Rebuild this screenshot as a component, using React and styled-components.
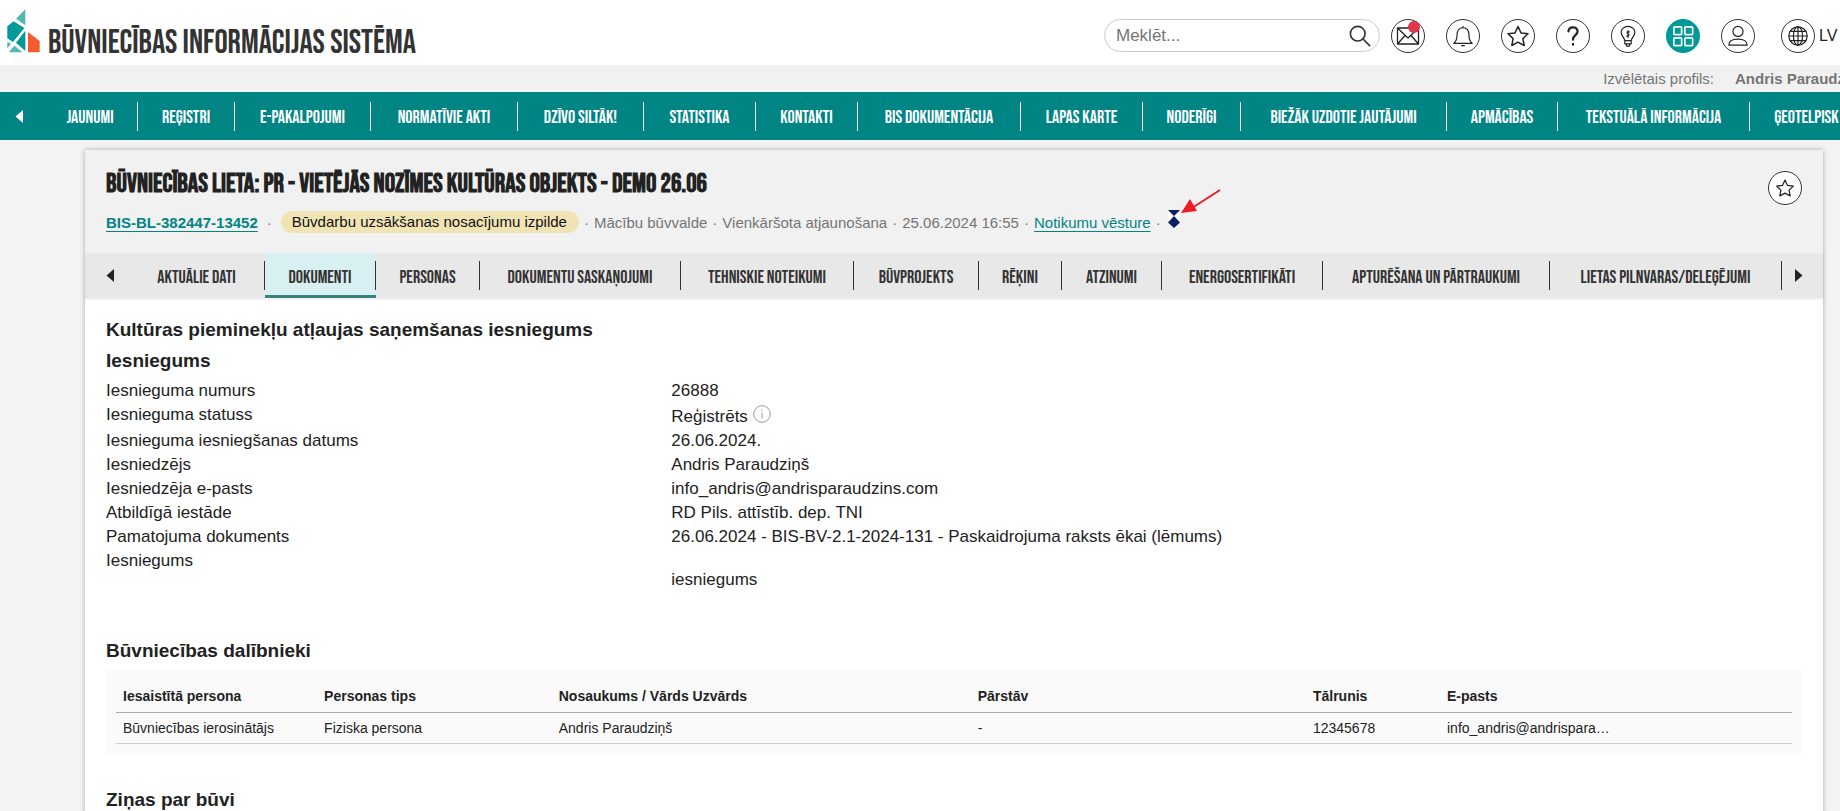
import React from 'react';
import styled, { createGlobalStyle } from 'styled-components';

const sans = "'Liberation Sans', Arial, sans-serif";
const narrow = "'Bebas Neue', 'Liberation Sans', sans-serif";

const GlobalStyle = createGlobalStyle`
  * { box-sizing: border-box; }
  body {
    margin: 0;
    background: #f3f3f3;
    color: #222;
    font-family: ${sans};
    font-size: 17px;
    overflow: hidden;
  }
`

const Page = styled.div`
  height: 100vh;
  overflow: hidden;
`

const Header = styled.header`
  display: flex;
  align-items: center;
  justify-content: space-between;
  height: 65px;
  padding-left: 7px;
  background: #fff;
`

const Brand = styled.a`
  display: flex;
  align-items: flex-end;
  gap: 8px;
  padding-bottom: 4px;
  color: #333;
  text-decoration: none;
  white-space: nowrap;
`

const BrandName = styled.span`
  font-family: ${narrow};
  font-size: 33px;
  line-height: 20px;
`

const Tools = styled.div`
  display: flex;
  align-items: center;
  gap: 21px;
  padding-bottom: 4px;
  margin-top: 10px;
`

const Search = styled.form`
  display: flex;
  align-items: center;
  width: 276px;
  height: 33px;
  padding: 0 8px 0 11px;
  margin-right: -10px;
  border: 1px solid #ccc;
  border-radius: 17px;
`

const SearchInput = styled.input`
  flex: 1;
  min-width: 0;
  border: 0;
  padding: 0;
  background: transparent;
  font-family: ${sans};
  font-size: 17px;
  outline: none;
  &::placeholder { color: #757575; opacity: 1; }
`

const SearchButton = styled.button`
  border: 0;
  padding: 0;
  height: 22px;
  background: transparent;
  color: #333;
`

const RoundButton = styled.button`
  position: relative;
  display: flex;
  align-items: center;
  justify-content: center;
  flex: none;
  width: 34px;
  height: 34px;
  padding: 0;
  border: 1px solid ${props => props.$filled ? '#009999' : '#333'};
  border-radius: 50%;
  background: ${props => props.$filled ? '#009999' : '#fff'};
  color: ${props => props.$filled ? '#fff' : '#222'};
`

const Badge = styled.span`
  position: absolute;
  top: 1px;
  right: 4px;
  width: 12px;
  height: 12px;
  border-radius: 50%;
  background: #e0364c;
`

const Language = styled.div`
  display: flex;
  align-items: center;
  gap: 4px;
  width: 59px;
  margin-left: 5px;
  color: #222;
  font-size: 16px;
`

const ProfileBar = styled.div`
  display: flex;
  justify-content: flex-end;
  gap: 21px;
  height: 27px;
  line-height: 27px;
  background: #f1f1f1;
  color: #757575;
  font-size: 15px;
`

const ProfileName = styled.strong`
  width: 105px;
  overflow: hidden;
  white-space: nowrap;
`

const MainNav = styled.nav`
  display: flex;
  align-items: center;
  height: 48px;
  overflow: hidden;
  background: #008484;
  color: #fff;
`

const ScrollButton = styled.button`
  display: flex;
  align-items: center;
  flex: none;
  width: ${props => props.$width}px;
  padding: 0 0 0 ${props => props.$inset}px;
  border: 0;
  background: transparent;
  color: inherit;
`

const MainLink = styled.a`
  flex: none;
  width: ${props => props.$width}px;
  padding-top: 2px;
  line-height: 27px;
  border-right: 1px solid #fff;
  color: #fff;
  font-family: ${narrow};
  font-size: 18px;
  text-align: center;
  text-decoration: none;
  white-space: nowrap;
  &:last-child { border-right: 0; }
`

const Card = styled.main`
  margin: 10px 17px 0 85px;
  min-height: 661px;
  background: #fff;
  box-shadow: 0 0 5px rgba(0, 0, 0, 0.3);
`

const CaseHeader = styled.div`
  display: flex;
  justify-content: space-between;
  align-items: flex-start;
  height: 103px;
  padding: 21px 21px 0;
  background: #f1f1f1;
`

const CaseTitle = styled.h1`
  margin: 0;
  font-family: ${narrow};
  font-size: 26px;
  line-height: 28px;
  font-weight: 700;
`

const Meta = styled.div`
  display: flex;
  align-items: center;
  gap: 5px;
  height: 22px;
  margin-top: 12px;
  color: #757575;
  font-size: 15px;
  white-space: nowrap;
`

const CaseLink = styled.a`
  color: #008484;
  font-weight: ${props => props.$strong ? 700 : 400};
  text-underline-offset: 3px;
`

const Dot = styled.span`
  margin: 0 ${props => props.$wide ? 4 : 0}px;
`

const Pill = styled.span`
  padding: 0 12px 0 11px;
  line-height: 22px;
  border-radius: 11px;
  background: #f0e4b4;
  color: #111;
`

const MarkerIcon = styled.span`
  position: relative;
  height: 18px;
  margin-left: 2px;
  margin-top: -6px;
`

const Arrow = styled.svg`
  position: absolute;
  left: 13px;
  top: -21px;
`

const Tabs = styled.nav`
  display: flex;
  align-items: center;
  height: 45px;
  background: #e8e8e8;
  color: #222;
  box-shadow: 0 1px 2px rgba(0, 0, 0, 0.1);
`

const TabList = styled.div`
  display: flex;
  flex: 1;
  min-width: 0;
  overflow: hidden;
`

const Tab = styled.a`
  flex: none;
  display: flex;
  align-items: center;
  height: 45px;
  width: ${props => props.$width}px;
  padding-top: ${props => props.$active ? 3 : 0}px;
  border-bottom: ${props => props.$active ? '3px solid #388280' : '0'};
  background: ${props => props.$active ? '#d8f0f1' : 'transparent'};
  color: #333;
  text-decoration: none;
`

const TabLabel = styled.span`
  flex: 1;
  padding-top: 4px;
  line-height: 25px;
  border-right: 1px solid #333;
  font-family: ${narrow};
  font-size: 18px;
  text-align: center;
  white-space: nowrap;
`

const Content = styled.section`
  padding: 16px 21px 0;
`

const Heading = styled.h2`
  margin: 0;
  font-size: 19px;
  line-height: 31px;
`

const Details = styled.dl`
  display: grid;
  grid-template-columns: 1fr 2fr;
  grid-auto-rows: minmax(24px, auto);
  line-height: 24px;
  margin: 3px 0 43px;
`

const Term = styled.dt`
  margin: 0;
`

const Value = styled.dd`
  margin: 0;
  padding-top: ${props => props.$drop || 0}px;
`

const InfoIcon = styled.svg`
  vertical-align: -1px;
`

const TableBox = styled.div`
  margin: 4px 0 29px;
  padding: 10px 10px 11px;
  background: #fafafa;
`

const Table = styled.table`
  width: 100%;
  table-layout: fixed;
  border-collapse: collapse;
  font-size: 14px;
  line-height: 16px;
  text-align: left;
`

const HeadCell = styled.th`
  width: ${props => props.$width};
  padding: 8px 7px;
  border-bottom: 1px solid #aaa;
`

const Cell = styled.td`
  padding: 7px;
  border-bottom: 1px solid #ccc;
`

const mainItems = [
    ['JAUNUMI', 95],
    ['REĢISTRI', 97],
    ['E-PAKALPOJUMI', 136],
    ['NORMATĪVIE AKTI', 147],
    ['DZĪVO SILTĀK!', 126],
    ['STATISTIKA', 112],
    ['KONTAKTI', 102],
    ['BIS DOKUMENTĀCIJA', 163],
    ['LAPAS KARTE', 122],
    ['NODERĪGI', 98],
    ['BIEŽĀK UZDOTIE JAUTĀJUMI', 206],
    ['APMĀCĪBAS', 111],
    ['TEKSTUĀLĀ INFORMĀCIJA', 192],
    ['ĢEOTELPISK', 113],
]

const tabItems = [
    ['AKTUĀLIE DATI', 136],
    ['DOKUMENTI', 111],
    ['PERSONAS', 104],
    ['DOKUMENTU SASKAŅOJUMI', 201],
    ['TEHNISKIE NOTEIKUMI', 173],
    ['BŪVPROJEKTS', 125],
    ['RĒĶINI', 83],
    ['ATZINUMI', 100],
    ['ENERGOSERTIFIKĀTI', 161],
    ['APTURĒŠANA UN PĀRTRAUKUMI', 227],
    ['LIETAS PILNVARAS/DELEĢĒJUMI', 232],
]

const columns = [
    ['Iesaistītā persona', '12%', 'Būvniecības ierosinātājs'],
    ['Personas tips', '14%', 'Fiziska persona'],
    ['Nosaukums / Vārds Uzvārds', '25%', 'Andris Paraudziņš'],
    ['Pārstāv', '20%', '-'],
    ['Tālrunis', '8%', '12345678'],
    ['E-pasts', '21%', 'info_andris@andrispara…'],
]

const Stroke = ({ size = 22, width = 1.3, children }) => (
    <svg width={size} height={size} viewBox="0 0 24 24" fill="none" stroke="currentColor" strokeWidth={width} strokeLinejoin="round" strokeLinecap="round" aria-hidden="true">
        {children}
    </svg>
)

const StarIcon = ({ size }) => (
    <Stroke size={size} width={1.5}>
        <path d="M12 2.5l3 6.4 7 .9-5.1 4.8 1.3 6.9-6.2-3.4-6.2 3.4 1.3-6.9L2 9.8l7-.9z" />
    </Stroke>
)

const Triangle = ({ right }) => (
    <svg width="8" height="13" viewBox="0 0 8 13" aria-hidden="true">
        <path d={right ? 'M0 0v13l7.5-6.5z' : 'M8 0v13L.5 6.5z'} fill="currentColor" />
    </svg>
)

const Logo = () => (
    <svg width="33" height="44" viewBox="0 0 99 132" aria-hidden="true">
        <path d="M55 1v48L27 29z" fill="#4fb8b6" />
        <path d="M1 52l19-15 32 20-34 42L1 88z" fill="#009999" />
        <path d="M55 65v61L27 101z" fill="#009999" />
        <path d="M1 98l11 6-11 14zM22 110l24 20H5z" fill="#4fb8b6" />
        <path d="M63 69l35 27v34H63z" fill="#f15d2f" />
    </svg>
)

function TopHeader() {
    return (
        <Header>
            <Brand href="#">
                <Logo />
                <BrandName>BŪVNIECĪBAS INFORMĀCIJAS SISTĒMA</BrandName>
            </Brand>
            <Tools>
                <Search>
                    <SearchInput aria-label="Meklēt" placeholder="Meklēt..." />
                    <SearchButton type="button" aria-label="Meklēt">
                        <Stroke width={1.8}><circle cx="9.5" cy="9.5" r="8" /><path d="M15.3 15.3L22.5 22.5" /></Stroke>
                    </SearchButton>
                </Search>
                <RoundButton aria-label="Ziņojumi">
                    <Stroke size={24}><path d="M1.5 4h21v16h-21zM1.5 4L12 14 22.5 4M1.5 20L9 11.5M22.5 20L15 11.5" /></Stroke>
                    <Badge />
                </RoundButton>
                <RoundButton aria-label="Paziņojumi">
                    <Stroke><path d="M12 1.5V3M2 20h20c-2.500-2-3.500-4-3.500-9 0-5-2.500-8-6.500-8s-6.500 3-6.500 8c0 5-1 7-3.500 9zM10.500 22.500h3" /></Stroke>
                </RoundButton>
                <RoundButton aria-label="Izlase"><StarIcon size={24} /></RoundButton>
                <RoundButton aria-label="Palīdzība">
                    <Stroke width={2.4}><path d="M7 7c.3-3 2.300-4.500 5-4.500s5 1.700 5 4.500c0 4-5 4-5 8.500v.5M12 20.500v1" /></Stroke>
                </RoundButton>
                <RoundButton aria-label="Ieteikumi">
                    <Stroke><path d="M8.500 17c0-3-4-4.500-4-9 0-3.500 3.300-6.500 7.500-6.500s7.500 3 7.500 6.500c0 4.500-4 6-4 9zM8.500 17h7v3.500h-7zM10 20.500l.5 2.500h3l.5-2.500M13.500 7.500c-3-.8-3 1.700-1.500 2.200s1.500 3-1.500 2.300M12 6.500v7" /></Stroke>
                </RoundButton>
                <RoundButton $filled aria-label="Izvēlne">
                    <Stroke width={1.8}><rect x="2" y="2" width="8.5" height="8.5" rx="1" /><rect x="14" y="2" width="8.5" height="8.5" rx="1" /><rect x="2" y="14" width="8.5" height="8.5" rx="1" /><rect x="14" y="14" width="8.5" height="8.5" rx="1" /></Stroke>
                </RoundButton>
                <RoundButton aria-label="Lietotājs">
                    <Stroke><circle cx="12" cy="7" r="5.5" /><path d="M2 22c0-4.500 3.500-6.500 10-6.500S22 17.500 22 22z" /></Stroke>
                </RoundButton>
                <Language>
                    <RoundButton aria-label="Valoda">
                        <Stroke><circle cx="12" cy="12" r="10" /><ellipse cx="12" cy="12" rx="5" ry="10" /><path d="M12 2v20M2 12h20M3.500 7h17M3.500 17h17" /></Stroke>
                    </RoundButton>
                    LV
                </Language>
            </Tools>
        </Header>
    )
}

function CaseInfo() {
    return (
        <CaseHeader>
            <div>
                <CaseTitle>BŪVNIECĪBAS LIETA: PR - VIETĒJĀS NOZĪMES KULTŪRAS OBJEKTS - DEMO 26.06</CaseTitle>
                <Meta>
                    <CaseLink href="#" $strong>BIS-BL-382447-13452</CaseLink>
                    <Dot $wide>·</Dot>
                    <Pill>Būvdarbu uzsākšanas nosacījumu izpilde</Pill>
                    <Dot>·</Dot>
                    <span>Mācību būvvalde</span>
                    <Dot>·</Dot>
                    <span>Vienkāršota atjaunošana</span>
                    <Dot>·</Dot>
                    <span>25.06.2024 16:55</span>
                    <Dot>·</Dot>
                    <CaseLink href="#">Notikumu vēsture</CaseLink>
                    <Dot>·</Dot>
                    <MarkerIcon>
                        <svg width="12" height="18" viewBox="0 0 12 18" aria-hidden="true">
                            <path d="M0 0h12v12H0z" fill="#fff" />
                            <path d="M0 0h12L6 6zM6 6l6 6.5L6 18 0 12.500z" fill="#0a1f66" />
                        </svg>
                        <Arrow width="40" height="26" viewBox="0 0 40 26" aria-hidden="true">
                            <path d="M39 1L11 19" stroke="#ed1c24" strokeWidth="2" />
                            <path d="M0 24L9 10l7 12z" fill="#ed1c24" />
                        </Arrow>
                    </MarkerIcon>
                </Meta>
            </div>
            <RoundButton aria-label="Pievienot izlasei"><StarIcon size={20} /></RoundButton>
        </CaseHeader>
    )
}

function Submission() {
    return (
        <Details>
            <Term>Iesnieguma numurs</Term>
            <Value>26888</Value>
            <Term>Iesnieguma statuss</Term>
            <Value $drop={2}>
                Reģistrēts{' '}
                <InfoIcon width="18" height="18" viewBox="0 0 18 18" fill="none" stroke="#999">
                    <circle cx="9" cy="9" r="8.3" /><path d="M9 7.500v6M9 4.500v1.500" />
                </InfoIcon>
            </Value>
            <Term>Iesnieguma iesniegšanas datums</Term>
            <Value>26.06.2024.</Value>
            <Term>Iesniedzējs</Term>
            <Value>Andris Paraudziņš</Value>
            <Term>Iesniedzēja e-pasts</Term>
            <Value>info_andris@andrisparaudzins.com</Value>
            <Term>Atbildīgā iestāde</Term>
            <Value>RD Pils. attīstīb. dep. TNI</Value>
            <Term>Pamatojuma dokuments</Term>
            <Value>26.06.2024 - BIS-BV-2.1-2024-131 - Paskaidrojuma raksts ēkai (lēmums)</Value>
            <Term>Iesniegums</Term>
            <Value $drop={19}>iesniegums</Value>
        </Details>
    )
}

function Participants() {
    return (
        <TableBox>
            <Table>
                <thead>
                    <tr>
                        {columns.map(([title, width]) => <HeadCell key={title} $width={width}>{title}</HeadCell>)}
                    </tr>
                </thead>
                <tbody>
                    <tr>
                        {columns.map(([title, width, value]) => <Cell key={title}>{value}</Cell>)}
                    </tr>
                </tbody>
            </Table>
        </TableBox>
    )
}

function App() {
    return (
        <Page>
            <GlobalStyle />
            <TopHeader />
            <ProfileBar>
                <span>Izvēlētais profils:</span>
                <ProfileName>Andris Paraudziņš</ProfileName>
            </ProfileBar>
            <MainNav>
                <ScrollButton $width={43} $inset={15} aria-label="Atpakaļ"><Triangle /></ScrollButton>
                {mainItems.map(([label, width]) => <MainLink href="#" key={label} $width={width}>{label}</MainLink>)}
            </MainNav>
            <Card>
                <CaseInfo />
                <Tabs>
                    <ScrollButton $width={44} $inset={21} aria-label="Iepriekšējās cilnes"><Triangle /></ScrollButton>
                    <TabList>
                        {tabItems.map(([label, width]) => (
                            <Tab href="#" key={label} $width={width} $active={label === 'DOKUMENTI'}>
                                <TabLabel>{label}</TabLabel>
                            </Tab>
                        ))}
                    </TabList>
                    <ScrollButton $width={41} $inset={13} aria-label="Nākamās cilnes"><Triangle right /></ScrollButton>
                </Tabs>
                <Content>
                    <Heading>Kultūras pieminekļu atļaujas saņemšanas iesniegums</Heading>
                    <Heading>Iesniegums</Heading>
                    <Submission />
                    <Heading>Būvniecības dalībnieki</Heading>
                    <Participants />
                    <Heading>Ziņas par būvi</Heading>
                </Content>
            </Card>
        </Page>
    )
}

export default App;
